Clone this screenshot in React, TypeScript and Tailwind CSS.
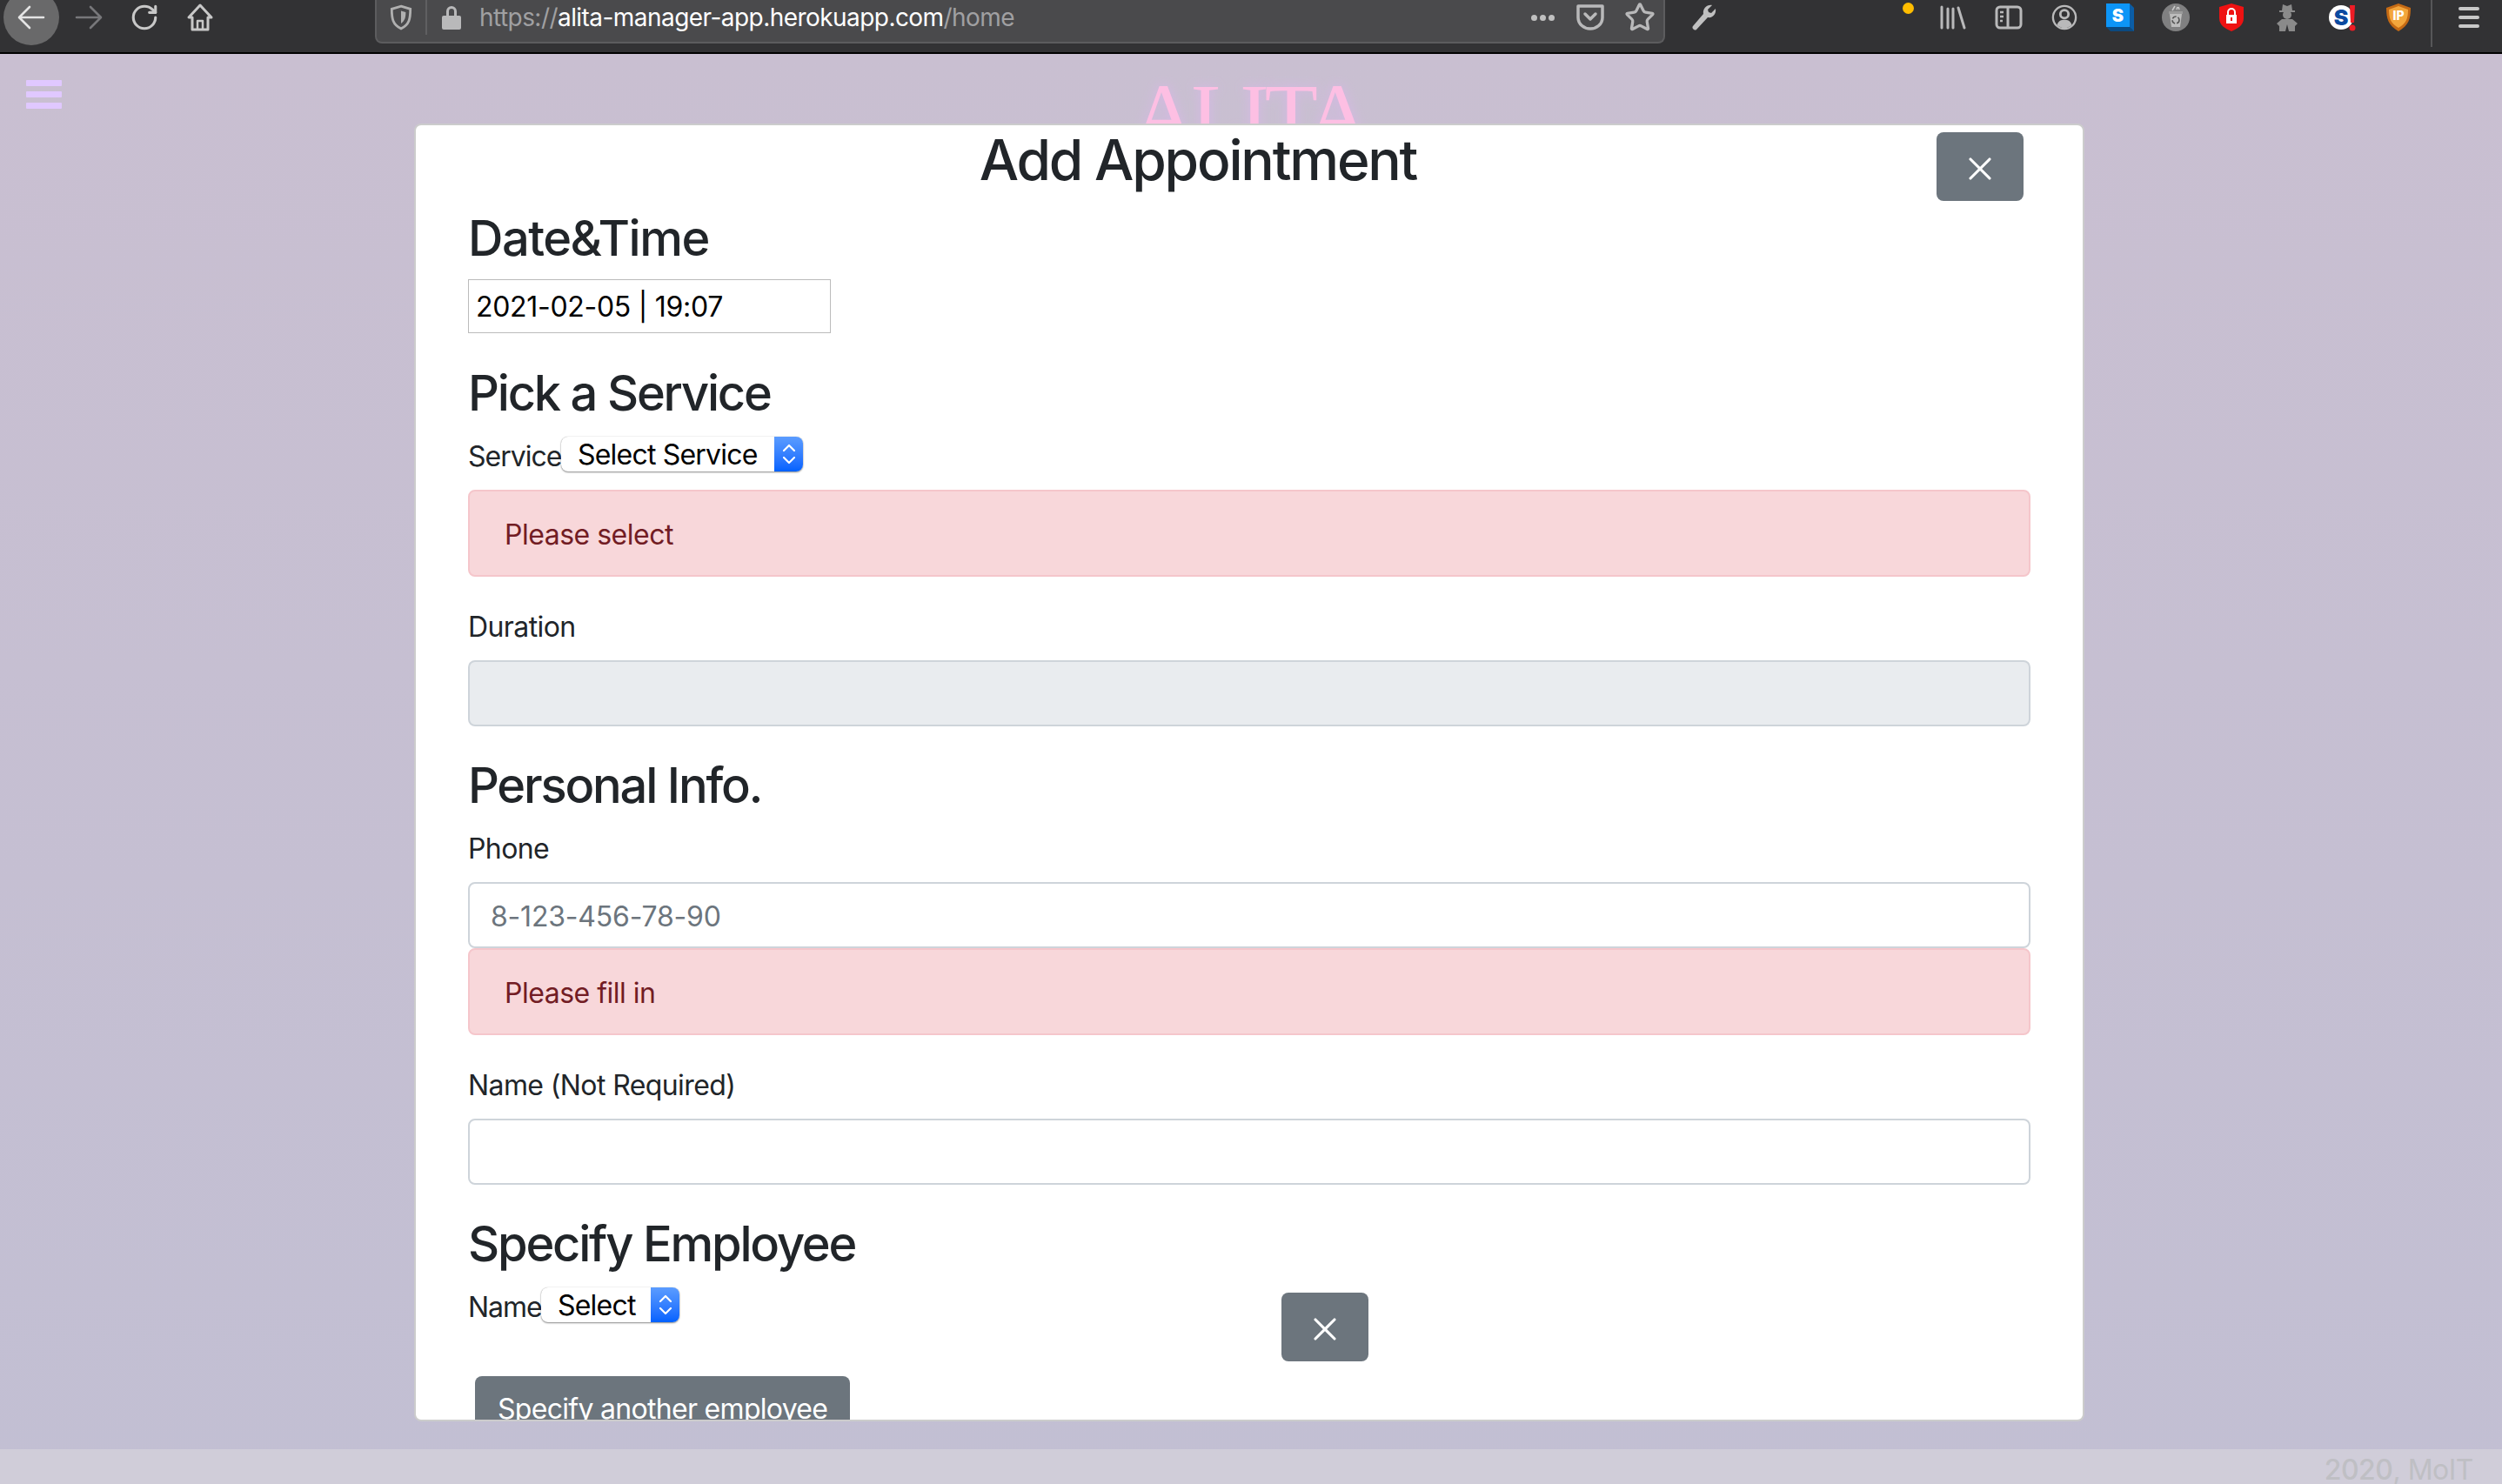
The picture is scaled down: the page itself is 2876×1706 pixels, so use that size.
import { X, Star, RotateCw } from "lucide-react";

// Browser chrome

function ToolSlot({ children, className = "" }: { children?: React.ReactNode; className?: string }) {
  return <div className={`flex h-[40px] items-center justify-center ${className}`}>{children}</div>;
}

function HomeIcon() {
  return (
    <svg viewBox="0 0 32 34" className="h-[34px] w-[32px]" fill="none" stroke="#c8c8c8" strokeWidth="3" strokeLinejoin="round">
      <path d="M16 3L3 17h4v14h18V17h4z" />
      <path d="M13 31V21h6v10" strokeWidth="2.5" />
    </svg>
  );
}

function WrenchIcon() {
  return (
    <svg viewBox="0 0 32 32" className="h-[32px] w-[32px]" fill="#c0c0c0">
      <path d="M27 2l-5 5 1 3 3 1 5-5c1 6-3 11-9 10L9 30c-2 2-6-2-4-4l12-14C16 6 21 1 27 2z" />
    </svg>
  );
}

function LibraryIcon() {
  return (
    <svg viewBox="0 0 32 28" className="h-[28px] w-[32px]" fill="none" stroke="#b9b9ba" strokeWidth="3" strokeLinecap="round">
      <path d="M3 2v24M10 4v22M16 4v22M22 3l7 23" />
    </svg>
  );
}

function SidebarIcon() {
  return (
    <svg viewBox="0 0 32 28" className="h-[28px] w-[32px]" fill="none" stroke="#b9b9ba" strokeWidth="3">
      <rect x="2" y="2" width="28" height="24" rx="4" />
      <path d="M15 2v24" />
      <path d="M6 8h4M6 13h4M6 18h3" strokeWidth="2.5" />
    </svg>
  );
}

function AccountIcon() {
  return (
    <svg viewBox="0 0 32 32" className="h-[30px] w-[30px]" fill="none" stroke="#b9b9ba" strokeWidth="2.5">
      <circle cx="16" cy="16" r="14" />
      <circle cx="16" cy="12" r="5" strokeWidth="3" />
      <path d="M7 25c2-5 5-6 9-6s7 1 9 6c-2 2-5 4-9 4s-7-2-9-4z" fill="#b9b9ba" stroke="none" />
    </svg>
  );
}

function BlueS() {
  return (
    <svg viewBox="0 0 32 32" className="h-[32px] w-[32px]">
      <path d="M0 27h27l5 5H5z" fill="#0b4a80" />
      <path d="M27 0l5 5v27l-5-5z" fill="#0a5da6" />
      <rect width="27" height="27" fill="#0d95f7" />
      <text x="13.5" y="21" textAnchor="middle" fontSize="20" fontWeight="900" fontFamily="Inter, sans-serif" fill="#fff">S</text>
    </svg>
  );
}

function RecycleIcon() {
  return (
    <svg viewBox="0 0 32 32" className="h-[32px] w-[32px]">
      <circle cx="16" cy="16" r="16" fill="#808081" />
      <path d="M9 12h14l-2 15H11z" fill="#bdbdbd" />
      <path d="M8 9h16v3H8z" fill="#9a9a9a" />
      <circle cx="16" cy="19" r="4" fill="none" stroke="#555" strokeWidth="1.6" strokeDasharray="5 2" />
      <path d="M12 8l3-5M17 7l1-3M20 7l-1-3" stroke="#c9c9c9" strokeWidth="1.5" />
    </svg>
  );
}

function RedShield() {
  return (
    <svg viewBox="0 0 28 32" className="h-[32px] w-[28px]">
      <path d="M14 0l14 4v13c0 8-7 12-14 15C7 29 0 25 0 17V4z" fill="#ee1212" />
      <path d="M10 13V10a4 4 0 0 1 8 0v3" fill="none" stroke="#fff" strokeWidth="2" />
      <rect x="8" y="13" width="12" height="10" fill="#fff" />
      <rect x="13" y="16" width="2" height="4" fill="#ee1212" />
    </svg>
  );
}

function SpyIcon() {
  return (
    <svg viewBox="0 0 26 32" className="h-[32px] w-[26px]" fill="#8a8a8a">
      <path d="M8 1l5 2 5-2 1 7h3v2H4V8h3z" />
      <circle cx="13" cy="13" r="5" />
      <path d="M7 18h12l6 5-3 3v6h-7l-2-8-2 8H4v-6l-3-3z" />
    </svg>
  );
}

function SBang() {
  return (
    <svg viewBox="0 0 32 32" className="h-[32px] w-[32px]">
      <circle cx="14" cy="16" r="14" fill="#fff" />
      <text x="14" y="25" textAnchor="middle" fontSize="25" fontWeight="900" fontFamily="Inter, sans-serif" fill="#0b4aa0">S</text>
      <path d="M24 2h6l-1 20h-4z" fill="#ee1c25" />
      <circle cx="27" cy="28" r="3.5" fill="#ee1c25" />
    </svg>
  );
}

function IpShield() {
  return (
    <svg viewBox="0 0 28 32" className="h-[32px] w-[28px]">
      <path d="M14 0l14 5c0 12-2 20-14 27C2 25 0 17 0 5z" fill="#c56a14" />
      <path d="M14 3l11 4c0 10-2 16-11 21C5 23 3 17 3 7z" fill="#f3a63c" />
      <text x="14" y="19" textAnchor="middle" fontSize="14" fontWeight="800" fontFamily="Inter, sans-serif" fill="#fff">IP</text>
    </svg>
  );
}

function BrowserBar() {
  return (
    <div className="flex h-[62px] w-full shrink-0 items-start border-b-2 border-black bg-[#323234] pl-[4px]">
      <ToolSlot className="w-[64px]">
        <div className="flex h-[64px] w-[64px] items-center justify-center rounded-full bg-[#69696a]">
          <svg viewBox="0 0 32 32" className="h-[32px] w-[32px]" fill="none" stroke="#e4e4e4" strokeWidth="2.6" strokeLinecap="round" strokeLinejoin="round">
            <path d="M30 16H3M14 4L2 16l12 12" />
          </svg>
        </div>
      </ToolSlot>
      <ToolSlot className="ml-[2px] w-[64px]">
        <svg viewBox="0 0 32 32" className="h-[32px] w-[32px]" fill="none" stroke="#77777a" strokeWidth="2.6" strokeLinecap="round" strokeLinejoin="round">
          <path d="M2 16h27M18 4l12 12-12 12" />
        </svg>
      </ToolSlot>
      <ToolSlot className="w-[64px]">
        <RotateCw size={34} color="#c8c8c8" strokeWidth={2.2} />
      </ToolSlot>
      <ToolSlot className="w-[64px]">
        <HomeIcon />
      </ToolSlot>
      <div className="ml-[169px] flex h-[50px] w-[1483px] items-start rounded-b-[8px] border-x-2 border-b-2 border-[#5c5c5e] bg-[#4a4a4c]">
        <ToolSlot className="w-[56px]">
          <svg viewBox="0 0 24 28" className="h-[30px] w-[26px]" fill="none" stroke="#b0b0b0" strokeWidth="2.6">
            <path d="M12 2l10 3c0 10-1 17-10 21C3 22 2 15 2 5z" />
            <path d="M12 7l5 1.500c0 6-1 9-5 12z" fill="#b0b0b0" stroke="none" />
          </svg>
        </ToolSlot>
        <div className="h-[40px] w-[2px] bg-[#5f5f61]" />
        <ToolSlot className="ml-[15px] w-[26px]">
          <svg viewBox="0 0 24 28" className="h-[28px] w-[24px]" fill="#b9b9ba">
            <path d="M6 12V7a6 6 0 0 1 12 0v5h-3V7a3 3 0 0 0-6 0v5z" />
            <rect x="1" y="12" width="22" height="16" rx="2" />
          </svg>
        </ToolSlot>
        <div className="ml-[19px] whitespace-nowrap text-[28px] leading-[40px] tracking-[-0.55px] text-[#a0a0a2]">
          https://<span className="text-white">alita-manager-app.herokuapp.com</span>/home
        </div>
        <ToolSlot className="ml-auto w-[30px]">
          <div className="flex gap-[3px]">
            <div className="h-[7px] w-[7px] rounded-full bg-[#c0c0c0]" />
            <div className="h-[7px] w-[7px] rounded-full bg-[#c0c0c0]" />
            <div className="h-[7px] w-[7px] rounded-full bg-[#c0c0c0]" />
          </div>
        </ToolSlot>
        <ToolSlot className="ml-[23px] w-[34px]">
          <svg viewBox="0 0 32 30" className="h-[30px] w-[32px]" fill="none" stroke="#b9b9ba" strokeWidth="3.5" strokeLinejoin="round">
            <path d="M2 2h28v13c0 8-7 13-14 13S2 23 2 15z" />
            <path d="M10 11l6 6 6-6" strokeLinecap="round" />
          </svg>
        </ToolSlot>
        <ToolSlot className="ml-[22px] mr-[9px] w-[36px]">
          <Star size={36} color="#b9b9ba" strokeWidth={2.2} />
        </ToolSlot>
      </div>
      <ToolSlot className="ml-[25px] w-[36px]">
        <WrenchIcon />
      </ToolSlot>
      <div className="ml-auto flex h-[40px] items-center">
        <div className="mr-[13px] mb-[22px] h-[13px] w-[13px] rounded-full bg-[#ffbd00]" />
        <ToolSlot className="w-[64px]"><LibraryIcon /></ToolSlot>
        <ToolSlot className="w-[64px]"><SidebarIcon /></ToolSlot>
        <ToolSlot className="w-[64px]"><AccountIcon /></ToolSlot>
        <ToolSlot className="w-[64px]"><BlueS /></ToolSlot>
        <ToolSlot className="w-[64px]"><RecycleIcon /></ToolSlot>
        <ToolSlot className="w-[64px]"><RedShield /></ToolSlot>
        <ToolSlot className="w-[64px]"><SpyIcon /></ToolSlot>
        <ToolSlot className="w-[64px]"><SBang /></ToolSlot>
        <ToolSlot className="w-[64px]"><IpShield /></ToolSlot>
        <div className="ml-[5px] h-[54px] w-[2px] self-start bg-[#565658]" />
        <div className="ml-[30px] mr-[26px] flex w-[24px] flex-col gap-[6px]">
          <div className="h-[4px] rounded-full bg-[#c8c8c8]" />
          <div className="h-[4px] rounded-full bg-[#c8c8c8]" />
          <div className="h-[4px] rounded-full bg-[#c8c8c8]" />
        </div>
      </div>
    </div>
  );
}

// App page behind the dialog

function AppNavbar() {
  return (
    <div className="grid grid-cols-[1fr_auto_1fr] items-start px-[30px] pt-[20px]">
      <div className="mt-[10px] flex w-[41px] flex-col gap-[6px]">
        <div className="h-[7px] rounded-[1px] bg-[#e0c8ff]" />
        <div className="h-[7px] rounded-[1px] bg-[#e0c8ff]" />
        <div className="h-[7px] rounded-[1px] bg-[#e0c8ff]" />
      </div>
      <div className="pr-[5px] font-['Liberation_Serif',serif] text-[100px] leading-[100px] tracking-[-5px] text-[#fdbfe3] [text-shadow:0_0_14px_#d8b8e8]">
        ALITA
      </div>
      <div />
    </div>
  );
}

// Form parts

function SectionTitle({ children, tracking = "tracking-[-2.2px]" }: { children: React.ReactNode; tracking?: string }) {
  return <h3 className={`mb-[13px] pt-[3px] text-[56px] font-medium leading-[67px] text-[#212529] ${tracking}`}>{children}</h3>;
}

function FieldLabel({ children }: { children: React.ReactNode }) {
  return <label className="mb-[14px] block pt-[2px] text-[32px] leading-[48px] tracking-[-0.6px] text-[#212529]">{children}</label>;
}

function Alert({ children }: { children: React.ReactNode }) {
  return (
    <div className="rounded-[8px] border-2 border-[#f5c6cb] bg-[#f8d7da] px-[40px] pt-[26px] pb-[22px] text-[32px] leading-[48px] tracking-[-0.5px] text-[#721c24]">
      {children}
    </div>
  );
}

function Stepper() {
  return (
    <div className="flex w-[33px] items-center justify-center rounded-r-[8px] bg-linear-to-b from-[#5b9cff] to-[#0061ff]">
      <svg viewBox="0 0 16 28" className="h-[28px] w-[16px]" fill="none" stroke="#fff" strokeWidth="2.2" strokeLinecap="round" strokeLinejoin="round">
        <path d="M2 10l6-6 6 6M2 18l6 6 6-6" />
      </svg>
    </div>
  );
}

function NativeSelect({ label, textWidth }: { label: string; textWidth: string }) {
  return (
    <div className="mt-[3px] flex h-[40px] rounded-[8px] bg-white shadow-[0_1px_2px_rgba(0,0,0,0.45),0_0_1px_rgba(0,0,0,0.3)]">
      <div className={`pl-[19px] text-[32px] leading-[41px] tracking-[-0.8px] text-black ${textWidth}`}>{label}</div>
      <Stepper />
    </div>
  );
}

function CloseButton({ className = "" }: { className?: string }) {
  return (
    <button className={`flex h-[79px] w-[100px] shrink-0 items-center justify-center rounded-[8px] bg-[#6c757d] pt-[4px] ${className}`}>
      <X size={44} color="#fff" strokeWidth={1.7} />
    </button>
  );
}

function AppointmentModal() {
  return (
    <div className="absolute inset-x-0 top-[142px] flex justify-center pr-[4px]">
      <div className="h-[1492px] w-[1920px] overflow-hidden rounded-[8px] border-2 border-[#cccccc] bg-white">
        <div className="flex h-[94px] items-start pl-[50px]">
          <h2 className="flex-1 pt-[1px] text-center text-[64px] font-medium leading-[77px] tracking-[-2.2px] text-[#212529]">Add Appointment</h2>
          <CloseButton className="mt-[8px] mr-[68px]" />
        </div>
        <div className="px-[60px]">
          <SectionTitle tracking="tracking-[-1.5px]">Date&amp;Time</SectionTitle>
          <input
            readOnly
            value="2021-02-05 | 19:07"
            className="mb-[33px] block h-[62px] w-[417px] border border-[#bbbbbb] px-[8px] text-[32px] tracking-[-0.3px] text-black outline-none"
          />

          <SectionTitle>Pick a Service</SectionTitle>
          <div className="mb-[16px] flex h-[48px] items-start">
            <span className="w-[107px] text-[32px] leading-[52px] tracking-[-1px] text-[#212529]">Service</span>
            <NativeSelect label="Select Service" textWidth="w-[245px]" />
          </div>
          <Alert>Please select</Alert>

          <div className="mt-[32px] mb-[32px]">
            <FieldLabel>Duration</FieldLabel>
            <input disabled className="block h-[76px] w-full rounded-[8px] border-2 border-[#ced4da] bg-[#e9ecef]" />
          </div>

          <SectionTitle>Personal Info.</SectionTitle>
          <FieldLabel>Phone</FieldLabel>
          <input
            readOnly
            placeholder="8-123-456-78-90"
            className="block h-[76px] w-full rounded-[8px] border-2 border-[#ced4da] bg-white px-[24px] pt-[2px] text-[32px] tracking-[-0.2px] outline-none placeholder:text-[#6c757d]"
          />
          <Alert>Please fill in</Alert>

          <div className="mt-[32px] mb-[32px]">
            <FieldLabel>Name (Not Required)</FieldLabel>
            <input className="block h-[76px] w-full rounded-[8px] border-2 border-[#ced4da] bg-white" />
          </div>

          <SectionTitle>Specify Employee</SectionTitle>
          <div className="flex items-start">
            <span className="w-[84px] text-[32px] leading-[52px] tracking-[-1px] text-[#212529]">Name</span>
            <NativeSelect label="Select" textWidth="w-[126px]" />
            <CloseButton className="mt-[9px] ml-[692px]" />
          </div>
          <button className="mt-[17px] ml-[8px] block rounded-[8px] bg-[#6c757d] px-[26px] py-[14px] text-[32px] leading-[48px] tracking-[-0.7px] text-white">
            Specify another employee
          </button>
        </div>
      </div>
    </div>
  );
}

export default function App() {
  return (
    <div className="relative flex h-[1706px] w-[2876px] flex-col overflow-hidden bg-[#323234] font-['Inter',sans-serif]">
      <BrowserBar />
      <div className="flex flex-1 flex-col bg-linear-to-b from-[#c9bfd1] to-[#c2bfd3]">
        <AppNavbar />
        <div className="flex-1" />
        <footer className="h-[40px] overflow-hidden bg-[#d0cdd9] pr-[33px] text-right text-[32px] leading-[48px] tracking-[-0.5px] text-[#bfbfc4]">
          <span className="font-medium">2020</span>, MoIT
        </footer>
      </div>
      <AppointmentModal />
    </div>
  );
}
